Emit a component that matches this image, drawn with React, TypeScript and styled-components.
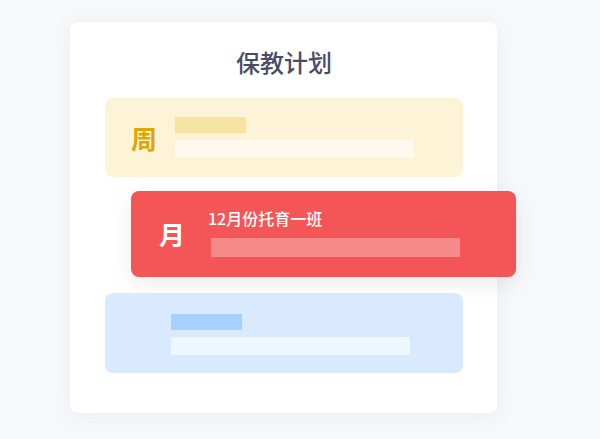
import styled, { createGlobalStyle } from "styled-components";

const Global = createGlobalStyle`
  body {
    margin: 0;
    background: #f7f8fa;
    font-family: "Noto Sans CJK SC", "Noto Sans", sans-serif;
  }
`;

type Tone = "yellow" | "red" | "blue";

const tones = {
  yellow: { bg: "#fdf4d8", mark: "#dfa700", short: "#f6e2a1", long: "#fef9ec" },
  red: { bg: "#f45556", mark: "#ffffff", short: "#ffffff", long: "#f68a8a" },
  blue: { bg: "#d9e9fe", mark: "#3b82f6", short: "#a6d0fe", long: "#eef6fe" },
};

export default function App() {
  return (
    <Page>
      <Global />
      <Card>
        <Title>保教计划</Title>
        <List>
          <Plan $tone="yellow">
            <Mark $tone="yellow">周</Mark>
            <Lines>
              <ShortBar $tone="yellow" />
              <LongBar $tone="yellow" />
            </Lines>
          </Plan>
          <ActivePlan $tone="red">
            <Mark $tone="red">月</Mark>
            <Lines $gap={9}>
              <PlanName>12月份托育一班</PlanName>
              <LongBar $tone="red" />
            </Lines>
          </ActivePlan>
          <Plan $tone="blue">
            <Mark $tone="blue" />
            <Lines $shift={-4}>
              <ShortBar $tone="blue" />
              <LongBar $tone="blue" />
            </Lines>
          </Plan>
        </List>
      </Card>
    </Page>
  );
}

const Page = styled.div`
  min-height: 439px;
  box-sizing: border-box;
  padding: 22px 0 0 70px;
`;

const Card = styled.div`
  width: 427px;
  box-sizing: border-box;
  padding: 24px 34px 40px 35px;
  background: #ffffff;
  border-radius: 8px;
  box-shadow: 0 4px 24px rgba(30, 40, 70, 0.05);
`;

const Title = styled.h1`
  margin: 0 0 20px;
  text-align: center;
  font-size: 24px;
  line-height: 32px;
  font-weight: 500;
  color: #474d66;
`;

const List = styled.div`
  display: flex;
  flex-direction: column;
  gap: 14px;
`;

const Plan = styled.div<{ $tone: Tone }>`
  display: flex;
  align-items: center;
  height: 79px;
  border-radius: 8px;
  background: ${(p) => tones[p.$tone].bg};
  padding-left: 25px;
  gap: 17px;
  box-sizing: border-box;
  &:last-child {
    margin-top: 2px;
    height: 80px;
    padding-top: 2px;
  }
`;

const ActivePlan = styled(Plan)`
  height: 86px;
  margin: 0 -53px 0 26px;
  padding-left: 27px;
  gap: 22px;
  box-shadow: 0 6px 20px rgba(60, 60, 80, 0.1);
`;

const Mark = styled.div<{ $tone: Tone }>`
  width: 28px;
  font-size: 26px;
  font-weight: 700;
  line-height: 30px;
  text-align: center;
  color: ${(p) => tones[p.$tone].mark};
`;

const Lines = styled.div<{ $shift?: number; $gap?: number }>`
  display: flex;
  flex-direction: column;
  gap: ${(p) => p.$gap ?? 7}px;
  margin-left: ${(p) => p.$shift ?? 0}px;
`;

const ShortBar = styled.div<{ $tone: Tone }>`
  width: 71px;
  height: 16px;
  background: ${(p) => tones[p.$tone].short};
`;

const LongBar = styled.div<{ $tone: Tone }>`
  width: 239px;
  height: 18px;
  background: ${(p) => tones[p.$tone].long};
  ${ActivePlan} & {
    width: 249px;
    height: 19px;
    margin-left: 3px;
  }
`;

const PlanName = styled.div`
  font-size: 16px;
  line-height: 22px;
  font-weight: 500;
  color: #ffffff;
  margin-top: -5px;
`;
